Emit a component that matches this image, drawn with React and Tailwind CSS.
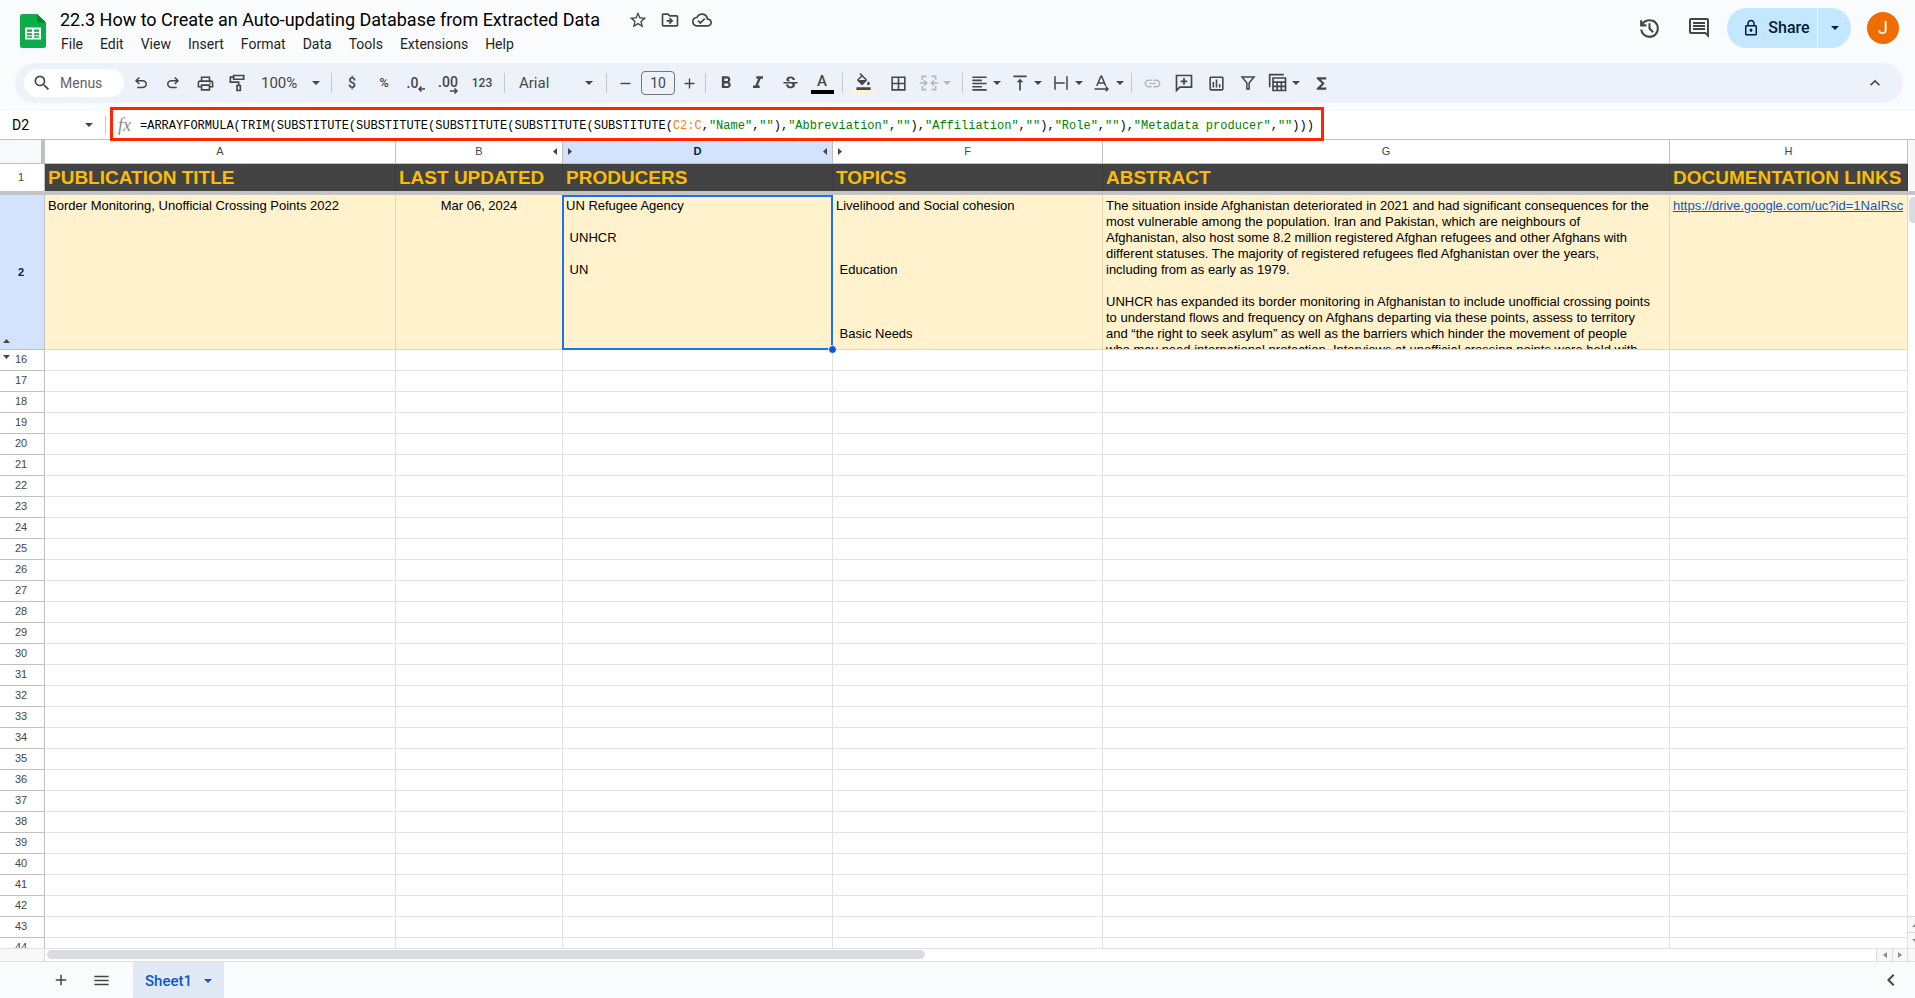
import React, { useState } from "react";
import {
    MdAdd,
    MdBorderAll,
    MdChevronLeft,
    MdFormatAlignLeft,
    MdFormatBold,
    MdFormatColorFill,
    MdFormatItalic,
    MdFunctions,
    MdKeyboardArrowUp,
    MdLink,
    MdMenu,
    MdOutlineCloudDone,
    MdOutlineComment,
    MdOutlineDriveFileMove,
    MdOutlineInsertChart,
    MdOutlineLock,
    MdOutlinePrint,
    MdRemove,
    MdSearch,
    MdStarBorder,
    MdStrikethroughS,
    MdVerticalAlignTop,
} from "react-icons/md";

const menus = ["File", "Edit", "View", "Insert", "Format", "Data", "Tools", "Extensions", "Help"];

const columns = [
    { id: "A", width: "w-[351px]", title: "PUBLICATION TITLE" },
    { id: "B", width: "w-[167px]", title: "LAST UPDATED", hiddenAfter: true },
    { id: "D", width: "w-[270px]", title: "PRODUCERS", hiddenBefore: true, hiddenAfter: true, selected: true },
    { id: "F", width: "w-[270px]", title: "TOPICS", hiddenBefore: true },
    { id: "G", width: "w-[567px]", title: "ABSTRACT" },
    { id: "H", width: "", title: "DOCUMENTATION LINKS" },
];

const abstract = `The situation inside Afghanistan deteriorated in 2021 and had significant consequences for the
most vulnerable among the population. Iran and Pakistan, which are neighbours of
Afghanistan, also host some 8.2 million registered Afghan refugees and other Afghans with
different statuses. The majority of registered refugees fled Afghanistan over the years,
including from as early as 1979.

UNHCR has expanded its border monitoring in Afghanistan to include unofficial crossing points
to understand flows and frequency on Afghans departing via these points, assess to territory
and “the right to seek asylum” as well as the barriers which hinder the movement of people
who may need international protection. Interviews at unofficial crossing points were held with`;

const record = {
    A: "Border Monitoring, Unofficial Crossing Points 2022",
    B: "Mar 06, 2024",
    D: "UN Refugee Agency\n\n UNHCR\n\n UN",
    F: "Livelihood and Social cohesion\n\n\n\n Education\n\n\n\n Basic Needs",
    G: abstract,
    H: "https://drive.google.com/uc?id=1NaIRsc",
};

const formula = [
    ["text-black", "=ARRAYFORMULA(TRIM(SUBSTITUTE(SUBSTITUTE(SUBSTITUTE(SUBSTITUTE(SUBSTITUTE("],
    ["text-[#f7811d]", "C2:C"],
    ["text-black", ","],
    ["text-[#008000]", '"Name"'],
    ["text-black", ","],
    ["text-[#008000]", '""'],
    ["text-black", "),"],
    ["text-[#008000]", '"Abbreviation"'],
    ["text-black", ","],
    ["text-[#008000]", '""'],
    ["text-black", "),"],
    ["text-[#008000]", '"Affiliation"'],
    ["text-black", ","],
    ["text-[#008000]", '""'],
    ["text-black", "),"],
    ["text-[#008000]", '"Role"'],
    ["text-black", ","],
    ["text-[#008000]", '""'],
    ["text-black", "),"],
    ["text-[#008000]", '"Metadata producer"'],
    ["text-black", ","],
    ["text-[#008000]", '""'],
    ["text-black", ")))"],
];

// Rows 3-15 are hidden in the sheet
const emptyRows = Array.from({ length: 29 }, (_, index) => index + 16);

function Caret({ className = "" }) {
    return (
        <svg width="8" height="4" viewBox="0 0 8 4" fill="currentColor" className={`shrink-0 ${className}`}>
            <path d="M0 0h8L4 4z" />
        </svg>
    );
}

function Symbol({ d, size = 20 }) {
    return (
        <svg width={size} height={size} viewBox="0 -960 960 960" fill="currentColor">
            <path d={d} />
        </svg>
    );
}

function Stroke({ children, size = 20 }) {
    return (
        <svg width={size} height={size} viewBox="0 0 24 24" fill="none" stroke="currentColor" strokeWidth="2">
            {children}
        </svg>
    );
}

function SheetsLogo() {
    return (
        <svg width="26" height="34" viewBox="0 0 26 34" className="shrink-0">
            <path d="M2.500 0H17l9 8.500V31.500a2.500 2.500 0 0 1-2.500 2.500h-21A2.500 2.500 0 0 1 0 31.500v-29A2.500 2.500 0 0 1 2.500 0z" fill="#0bad4b" />
            <path d="M17 0l9 8.500h-9z" fill="#11802f" />
            <path d="M5 13.500h16v12H5z" fill="#fff" />
            <path d="M7 15.500h5v2.200H7zM14 15.500h5v2.200h-5zM7 19.200h5v1.700H7zM14 19.200h5v1.700h-5zM7 22.300h5v1.500H7zM14 22.300h5v1.500h-5z" fill="#0bad4b" />
        </svg>
    );
}

function ToolButton({ label, children, className = "w-8" }) {
    return (
        <button aria-label={label} className={`flex h-7 shrink-0 items-center justify-center ${className}`}>
            {children}
        </button>
    );
}

function DropButton({ label, children, className = "w-[41px]" }) {
    return (
        <button aria-label={label} className={`flex h-7 shrink-0 items-center ${className}`}>
            <span className="flex w-6 shrink-0 justify-center">{children}</span>
            <Caret className="ml-0.5" />
        </button>
    );
}

function Divider() {
    return <div className="mx-1 h-5 w-px shrink-0 bg-[#c7c7c7]" />;
}

function Header() {
    const [title, setTitle] = useState("22.3 How to Create an Auto-updating Database from Extracted Data");

    return (
        <header className="flex h-[63px] justify-between pr-4 pl-5 text-[#444746]">
            <div className="flex gap-3.5 pt-1">
                <div className="pt-2.5">
                    <SheetsLogo />
                </div>
                <div>
                    <div className="flex h-8 items-center">
                        <input
                            aria-label="Document title"
                            className="field-sizing-content text-lg text-black outline-none"
                            value={title}
                            onChange={(e) => setTitle(e.target.value)}
                        />
                        <button aria-label="Star" className="ml-7">
                            <MdStarBorder size={20} />
                        </button>
                        <button aria-label="Move" className="ml-3">
                            <MdOutlineDriveFileMove size={20} />
                        </button>
                        <button aria-label="Document status" className="ml-3">
                            <MdOutlineCloudDone size={20} />
                        </button>
                    </div>
                    <nav className="flex gap-[17px] pl-px text-sm leading-4 text-[#1f1f1f]">
                        {menus.map((menu) => (
                            <button key={menu}>{menu}</button>
                        ))}
                    </nav>
                </div>
            </div>
            <div className="flex items-start pt-2">
                <button aria-label="Version history" className="flex size-10 items-center justify-center">
                    <Symbol size={25} d="M480-120q-138 0-240.500-91.500T122-440h82q14 104 92.500 172T480-200q117 0 198.500-81.500T760-480q0-117-81.500-198.500T480-760q-69 0-129 32t-101 88h110v80H120v-240h80v94q51-64 124.500-99T480-840q75 0 140.500 28.500t114 77q48.500 48.500 77 114T840-480q0 75-28.500 140.500t-77 114q-48.500 48.500-114 77T480-120Zm112-192L440-464v-216h80v184l128 128-56 56Z" />
                </button>
                <button aria-label="Comments" className="ml-2.5 flex size-10 items-center justify-center">
                    <MdOutlineComment size={24} />
                </button>
                <button className="ml-2 flex h-10 w-[90px] items-center justify-center gap-2 rounded-l-full bg-[#c2e7ff] pl-2 text-base font-medium text-[#001d35]">
                    <MdOutlineLock size={18} />
                    Share
                </button>
                <button aria-label="Share options" className="ml-px flex h-10 w-[33px] items-center justify-center rounded-r-full bg-[#c2e7ff] text-[#001d35]">
                    <Caret />
                </button>
                <button className="mt-1 ml-4 size-8 rounded-full bg-[#ef6c00] text-lg leading-8 text-white">J</button>
            </div>
        </header>
    );
}

function Toolbar() {
    const [fontSize, setFontSize] = useState("10");

    return (
        <div className="mr-3 ml-[15px] flex h-10 items-center rounded-full bg-[#edf2fa] pr-3 pl-[9px] text-[#444746]">
            <label className="mr-px flex h-7 w-[100px] items-center rounded-full bg-white pl-2">
                <MdSearch size={20} className="shrink-0" />
                <input
                    aria-label="Search the menus"
                    placeholder="Menus"
                    className="ml-2 w-14 text-sm outline-none placeholder:text-[#5f6368]"
                />
            </label>
            <ToolButton label="Undo">
                <Symbol size={18} d="M280-200v-80h284q63 0 109.500-40T720-420q0-60-46.500-100T564-560H312l104 104-56 56-200-200 200-200 56 56-104 104h252q97 0 166.500 63T800-420q0 94-69.500 157T564-200H280Z" />
            </ToolButton>
            <ToolButton label="Redo">
                <Symbol size={18} d="M396-200q-97 0-166.500-63T160-420q0-94 69.500-157T396-640h252L544-744l56-56 200 200-200 200-56-56 104-104H396q-63 0-109.500 40T240-420q0 60 46.500 100T396-280h284v80H396Z" />
            </ToolButton>
            <ToolButton label="Print">
                <MdOutlinePrint size={19} />
            </ToolButton>
            <ToolButton label="Paint format">
                <Stroke>
                    <path d="M8 3h12v4.500H8zM8 5H4v6h10v4M12 15h4v6h-4z" />
                </Stroke>
            </ToolButton>
            <div className="flex w-[74px] items-center">
                <select aria-label="Zoom" className="w-[52px] appearance-none pl-2 text-[15px] outline-none">
                    <option>100%</option>
                </select>
                <Caret className="ml-[7px]" />
            </div>
            <Divider />
            <ToolButton label="Format as currency">
                <span className="text-sm font-medium">$</span>
            </ToolButton>
            <ToolButton label="Format as percent">
                <span className="text-[13px] font-medium">%</span>
            </ToolButton>
            <ToolButton label="Decrease decimal places">
                <span className="text-sm leading-4 font-medium">.0</span>
                <svg width="7" height="6" viewBox="0 0 7 6" fill="none" stroke="currentColor" strokeWidth="1.500" className="mt-3">
                    <path d="M7 3H1M3.500 .5L1 3l2.500 2.500" />
                </svg>
            </ToolButton>
            <ToolButton label="Increase decimal places">
                <span className="flex flex-col items-end pt-1">
                    <span className="text-sm leading-3 font-medium">.00</span>
                    <svg width="8" height="6" viewBox="0 0 8 6" fill="none" stroke="currentColor" strokeWidth="1.500">
                        <path d="M0 3h7M4.500 .5L7 3 4.500 5.500" />
                    </svg>
                </span>
            </ToolButton>
            <ToolButton label="More formats" className="w-9">
                <span className="text-xs font-medium">123</span>
            </ToolButton>
            <Divider />
            <div className="flex w-[93px] items-center">
                <select aria-label="Font" className="w-[68px] appearance-none pl-2.5 text-[15px] outline-none">
                    <option>Arial</option>
                </select>
                <Caret className="ml-2" />
            </div>
            <Divider />
            <ToolButton label="Decrease font size" className="w-7">
                <MdRemove size={17} />
            </ToolButton>
            <input
                aria-label="Font size"
                className="mx-0.5 h-6 w-[34px] rounded border border-[#747775] text-center text-sm outline-none"
                value={fontSize}
                onChange={(e) => setFontSize(e.target.value)}
            />
            <ToolButton label="Increase font size" className="w-6">
                <MdAdd size={17} />
            </ToolButton>
            <Divider />
            <ToolButton label="Bold">
                <MdFormatBold size={20} />
            </ToolButton>
            <ToolButton label="Italic">
                <MdFormatItalic size={20} />
            </ToolButton>
            <ToolButton label="Strikethrough">
                <MdStrikethroughS size={19} />
            </ToolButton>
            <ToolButton label="Text color">
                <span className="flex w-[23px] flex-col items-center border-b-4 border-black text-[15px] leading-[17px] font-medium">A</span>
            </ToolButton>
            <Divider />
            <ToolButton label="Fill color">
                <span className="flex w-[23px] justify-center border-b-4 border-[#fff2cc]">
                    <MdFormatColorFill size={17} />
                </span>
            </ToolButton>
            <ToolButton label="Borders" className="w-[38px]">
                <MdBorderAll size={19} />
            </ToolButton>
            <DropButton label="Merge cells" className="w-[41px] text-[#b4b7b9]">
                <Stroke size={20}>
                    <path d="M9 4H4v4M4 16v4h5M15 4h5v4M20 16v4h-5M1 12h8M6 9l3 3-3 3M23 12h-8M18 9l-3 3 3 3" />
                </Stroke>
            </DropButton>
            <Divider />
            <DropButton label="Horizontal align">
                <MdFormatAlignLeft size={19} />
            </DropButton>
            <DropButton label="Vertical align">
                <MdVerticalAlignTop size={20} />
            </DropButton>
            <DropButton label="Text wrapping">
                <Stroke size={18}>
                    <path d="M4 3v18M20 3v18M4 12h13" />
                </Stroke>
            </DropButton>
            <DropButton label="Text rotation" className="w-[37px]">
                <Stroke size={18}>
                    <path d="M5 16l5.500-13h1L17 16M7 12h8M2 20h18M17 17l3 3-3 3" />
                </Stroke>
            </DropButton>
            <Divider />
            <ToolButton label="Insert link">
                <MdLink size={19} className="text-[#b4b7b9]" />
            </ToolButton>
            <ToolButton label="Insert comment">
                <Stroke>
                    <path d="M3 21V3h18v14H7zM12 6v8M8 10h8" />
                </Stroke>
            </ToolButton>
            <ToolButton label="Insert chart">
                <MdOutlineInsertChart size={19} />
            </ToolButton>
            <ToolButton label="Create a filter">
                <Stroke size={18}>
                    <path d="M4 4h16l-6.500 8v8h-3v-8z" />
                </Stroke>
            </ToolButton>
            <DropButton label="Filter views" className="ml-0.5 w-[39px]">
                <Stroke size={20}>
                    <path d="M2 17V2h17M6 6h15v15H6zM6 11h15M6 16h15M11 11v10M16 11v10" />
                </Stroke>
            </DropButton>
            <ToolButton label="Functions">
                <MdFunctions size={19} />
            </ToolButton>
            <ToolButton label="Hide the menus" className="ml-auto w-8">
                <MdKeyboardArrowUp size={20} />
            </ToolButton>
        </div>
    );
}

function FormulaBar() {
    return (
        <div className="mt-2 flex h-[29px] items-center border-b border-[#c0c0c0] bg-white">
            <input aria-label="Name box" className="w-[72px] pl-3 text-sm text-black outline-none" defaultValue="D2" />
            <button aria-label="Named ranges" className="flex h-6 w-[33px] items-center justify-center text-[#444746]">
                <Caret />
            </button>
            <div className="h-[18px] w-px bg-[#c7c7c7]" />
            <div className="relative ml-1 flex h-full items-center pr-2.5 pl-2">
                <span className="w-[22px] font-['Liberation_Serif',serif] text-lg leading-5 text-[#8a8d8f] italic">fx</span>
                <div
                    role="textbox"
                    aria-label="Formula"
                    contentEditable
                    suppressContentEditableWarning
                    className="pt-0.5 font-['Liberation_Mono',monospace] text-xs whitespace-pre outline-none"
                >
                    {formula.map(([color, text], index) => (
                        <span key={index} className={color}>{text}</span>
                    ))}
                </div>
                <div className="pointer-events-none absolute inset-x-0 -top-1 -bottom-0.5 z-10 border-3 border-[#ff2600]" />
            </div>
        </div>
    );
}

function ColumnHeading({ column }) {
    return (
        <th
            scope="col"
            className={`border-r border-b border-[#c0c0c0] p-0 text-[11px] ${column.selected ? "bg-[#d3e3fd] font-bold text-[#041e49]" : "bg-white font-normal text-[#444746]"}`}
        >
            <div className="flex items-center px-[5px]">
                <span className="w-2">
                    {column.hiddenBefore && (
                        <svg width="4" height="7" viewBox="0 0 4 7" fill="#444746"><path d="M0 0l4 3.500L0 7z" /></svg>
                    )}
                </span>
                <span className="flex-1">{column.id}</span>
                <span className="flex w-2 justify-end">
                    {column.hiddenAfter && (
                        <svg width="4" height="7" viewBox="0 0 4 7" fill="#444746"><path d="M4 0L0 3.500 4 7z" /></svg>
                    )}
                </span>
            </div>
        </th>
    );
}

function RecordCell({ column }) {
    const value = record[column.id];
    return (
        <td className="relative border-r border-b border-[#e3d6b5] bg-[#fff2cc] p-0 align-top">
            <div className={`h-[154px] overflow-hidden pt-[3px] text-[13px] leading-4 whitespace-pre text-black ${column.id === "B" ? "text-center" : "pl-[3px]"}`}>
                {column.id === "H" ? <a href={value} className="text-[#1155cc] underline">{value}</a> : value}
            </div>
            {column.selected && (
                <>
                    <div className="absolute -inset-x-px top-0 -bottom-px border-2 border-[#1a73e8]" />
                    <div className="absolute -right-[5px] -bottom-[5px] z-10 size-[9px] rounded-full border border-white bg-[#0b57d0]" />
                </>
            )}
        </td>
    );
}

function Sheet() {
    return (
        <table className="w-full table-fixed border-separate border-spacing-0 font-['Liberation_Sans',Arial,sans-serif]">
            <colgroup>
                <col className="w-[45px]" />
                {columns.map((column) => (
                    <col key={column.id} className={column.width} />
                ))}
            </colgroup>
            <thead>
                <tr className="h-6">
                    <td className="border-r-4 border-b border-r-[#c0c0c0] border-b-[#c0c0c0] bg-[#f8f9fa] p-0" />
                    {columns.map((column) => (
                        <ColumnHeading key={column.id} column={column} />
                    ))}
                </tr>
            </thead>
            <tbody>
                <tr className="h-[27px]">
                    <th scope="row" className="border-r border-[#c0c0c0] p-0 pr-0.5 text-[11px] font-normal text-[#444746]">1</th>
                    {columns.map((column) => (
                        <td key={column.id} className="border-r border-[#3b3b3b] bg-[#434343] p-0 pl-[3px] text-[19px] leading-6 font-bold whitespace-nowrap text-[#fbbc04]">
                            {column.title}
                        </td>
                    ))}
                </tr>
                <tr className="h-1">
                    <td colSpan={7} className="bg-[#c4c4c4] p-0" />
                </tr>
                <tr>
                    <th scope="row" className="relative border-r border-b border-[#c0c0c0] bg-[#d3e3fd] p-0 pr-0.5 text-[11px] font-bold text-[#041e49]">
                        2
                        <svg width="7" height="4" viewBox="0 0 7 4" fill="#444746" className="absolute bottom-1.5 left-[3px]"><path d="M0 4h7L3.500 0z" /></svg>
                    </th>
                    {columns.map((column) => (
                        <RecordCell key={column.id} column={column} />
                    ))}
                </tr>
                {emptyRows.map((row) => (
                    <tr key={row} className="h-[21px]">
                        <th scope="row" className="relative border-r border-b border-[#c0c0c0] p-0 pr-0.5 align-top text-[11px] leading-[18px] font-normal text-[#444746]">
                            {row}
                            {row === 16 && (
                                <svg width="7" height="4" viewBox="0 0 7 4" fill="#444746" className="absolute top-[5px] left-[3px]"><path d="M0 0h7L3.500 4z" /></svg>
                            )}
                        </th>
                        {columns.map((column) => (
                            <td key={column.id} className="border-r border-b border-[#e1e1e1] p-0" />
                        ))}
                    </tr>
                ))}
            </tbody>
        </table>
    );
}

function VerticalScrollbar() {
    return (
        <div className="flex w-[7px] shrink-0 flex-col overflow-hidden">
            <div className="h-[51px] bg-[#f8f8f8]" />
            <div className="h-1 bg-[#c4c4c4]" />
            <div className="mt-0.5 ml-px h-[26px] w-3 rounded bg-[#dadce0]" />
            <div className="mt-auto w-4">
                <button aria-label="Scroll up" className="flex h-4 w-full items-center border-t border-[#d9d9d9] bg-[#f8f8f8] pl-1 text-[#8a8a8a]">
                    <Caret className="rotate-180" />
                </button>
                <button aria-label="Scroll down" className="flex h-4 w-full items-center border-t border-[#d9d9d9] bg-[#f8f8f8] pl-1 text-[#8a8a8a]">
                    <Caret />
                </button>
            </div>
        </div>
    );
}

function HorizontalScrollbar() {
    return (
        <div className="flex h-3.5 shrink-0 border-y border-[#dfe1e4] bg-white">
            <div className="w-[45px] border-r border-[#d9d9d9] bg-[#f8f8f8]" />
            <div className="flex flex-1 items-start pl-0.5">
                <div className="mt-px h-[9px] w-[48%] rounded-full bg-[#dadce0]" />
            </div>
            <button aria-label="Scroll left" className="flex w-4 items-center justify-center border-l border-[#d9d9d9] bg-[#f8f8f8]">
                <svg width="4" height="6" viewBox="0 0 4 6" fill="#8a8a8a"><path d="M4 0L0 3l4 3z" /></svg>
            </button>
            <button aria-label="Scroll right" className="flex w-4 items-center justify-center border-x border-[#d9d9d9] bg-[#f8f8f8]">
                <svg width="4" height="6" viewBox="0 0 4 6" fill="#8a8a8a"><path d="M0 0l4 3-4 3z" /></svg>
            </button>
            <div className="w-[7px] bg-[#f8f8f8]" />
        </div>
    );
}

function SheetTabs() {
    return (
        <footer className="flex h-9 shrink-0 items-center pr-3 pl-[45px] text-[#444746]">
            <button aria-label="Add sheet" className="flex size-8 items-center justify-center">
                <MdAdd size={18} />
            </button>
            <button aria-label="All sheets" className="ml-2 flex size-8 items-center justify-center">
                <MdMenu size={19} />
            </button>
            <button className="ml-4 flex h-full items-center gap-3 bg-[#e1e9f7] px-3 pt-0.5 text-[15px] font-medium text-[#0b57d0]">
                Sheet1
                <Caret />
            </button>
            <button aria-label="Show side panel" className="ml-auto">
                <MdChevronLeft size={24} />
            </button>
        </footer>
    );
}

function App() {
    return (
        <div className="flex h-screen flex-col overflow-hidden bg-[#f9fbfd] font-[Roboto,sans-serif]">
            <Header />
            <Toolbar />
            <FormulaBar />
            <main className="flex min-h-0 flex-1 bg-white">
                <div className="min-w-0 flex-1 overflow-hidden">
                    <Sheet />
                </div>
                <VerticalScrollbar />
            </main>
            <HorizontalScrollbar />
            <SheetTabs />
        </div>
    );
}

export default App;
